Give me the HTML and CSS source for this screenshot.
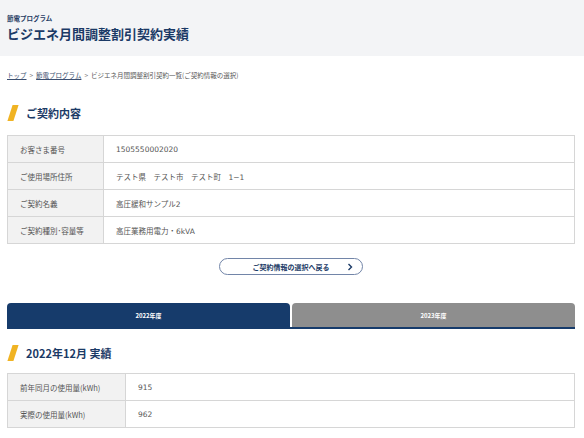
FILE: index.html
```html
<!DOCTYPE html>
<html lang="ja">
<head>
<meta charset="utf-8">
<link rel="stylesheet" href="styles.css">
</head>
<body>
<header class="page-header">
  <div class="eyebrow">節電プログラム</div>
  <h1 class="title">ビジエネ月間調整割引契約実績</h1>
</header>
<main class="content">
  <nav class="crumbs">
    <a href="#">トップ</a><span class="sep">&gt;</span><a href="#">節電プログラム</a><span class="sep">&gt;</span><span>ビジエネ月間調整割引契約一覧(ご契約情報の選択)</span>
  </nav>

  <h2 class="sec-title"><span class="bar"></span>ご契約内容</h2>
  <table class="info info-a">
    <tr><th>お客さま番号</th><td>1505550002020</td></tr>
    <tr><th>ご使用場所住所</th><td>テスト県　テスト市　テスト町　1−1</td></tr>
    <tr><th>ご契約名義</th><td>高圧緩和サンプル2</td></tr>
    <tr><th>ご契約種別･容量等</th><td>高圧業務用電力・6kVA</td></tr>
  </table>

  <div class="btn-row">
    <a class="back-btn" href="#"><span>ご契約情報の選択へ戻る</span>
      <svg class="chev" width="6" height="8" viewBox="0 0 6 8"><path d="M1.5 1 L4.5 4 L1.5 7" fill="none" stroke="#1b3a66" stroke-width="1.4"/></svg>
    </a>
  </div>

  <div class="tabs">
    <div class="tab active">2022年度</div>
    <div class="tab">2023年度</div>
  </div>

  <h2 class="sec-title sec-title-2"><span class="bar"></span>2022年12月 実績</h2>
  <table class="info info-b">
    <tr><th>前年同月の使用量(kWh)</th><td>915</td></tr>
    <tr><th>実際の使用量(kWh)</th><td>962</td></tr>
  </table>
</main>
</body>
</html>
```
FILE: styles.css
```css
* { box-sizing: border-box; }
html, body { margin: 0; padding: 0; }
body {
  background: #fff;
  font-family: "Noto Sans CJK JP", "Noto Sans", sans-serif;
  color: #333;
  width: 584px;
  overflow: hidden;
}
.page-header {
  background: #f3f4f6;
  height: 56px;
  padding: 14px 7px 0;
}
.eyebrow {
  font-size: 6.5px;
  font-weight: 700;
  color: #1e3a62;
  line-height: 8px;
}
.title {
  margin: 3px 0 0;
  font-size: 13px;
  line-height: 18px;
  font-weight: 700;
  color: #1b3a66;
}
.content { padding: 0 9px 0 7px; }
.crumbs {
  margin-top: 14px;
  font-size: 6.5px;
  line-height: 10px;
  color: #555;
}
.crumbs a { color: #3b4f70; text-decoration: underline; }
.crumbs .sep { margin: 0 3px; color: #777; }
.sec-title {
  display: flex;
  align-items: center;
  margin: 25px 0 0;
  font-size: 11px;
  line-height: 16px;
  font-weight: 700;
  color: #1b3a66;
  height: 16px;
}
.bar {
  display: inline-block;
  width: 6px;
  height: 16px;
  background: #f0b323;
  transform: skewX(-18deg);
  margin: 0 10px 0 3px;
}
.info {
  width: 100%;
  border-collapse: collapse;
  font-size: 7.5px;
  color: #555;
}
.info th, .info td {
  border: 1px solid #d6d6d6;
  height: 27px;
  text-align: left;
  font-weight: 400;
  padding: 0 12px;
}
.info td { font-family: "DejaVu Sans", "Noto Sans CJK JP", sans-serif; }
.info th { background: #f2f2f2; }
.info-a { margin-top: 14px; }
.info-a th { width: 96px; }
.info-b { margin-top: 12px; }
.info-b th { width: 118px; }
.btn-row {
  display: flex;
  justify-content: center;
  margin-top: 14px;
}
.back-btn {
  width: 144px;
  height: 17px;
  border: 1px solid #7285a8;
  border-radius: 9px;
  display: flex;
  align-items: center;
  justify-content: center;
  position: relative;
  text-decoration: none;
  color: #1b3a66;
  font-size: 7px;
  font-weight: 700;
}
.back-btn .chev { position: absolute; right: 9px; top: 4px; }
.tabs {
  display: flex;
  gap: 2px;
  margin-top: 28px;
  border-bottom: 2px solid #163b6b;
}
.tab {
  flex: 1;
  height: 24px;
  border-radius: 4px 4px 0 0;
  background: #8e8e8e;
  color: #fff;
  font-size: 6px;
  font-weight: 700;
  display: flex;
  align-items: center;
  justify-content: center;
}
.tab.active { background: #163b6b; }
.sec-title-2 { margin-top: 16px; }
```
